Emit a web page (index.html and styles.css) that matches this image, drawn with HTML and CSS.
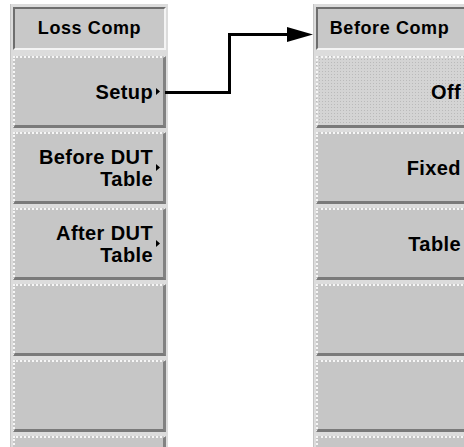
FILE: index.html
```html
<!DOCTYPE html>
<html lang="en">
<head>
  <meta charset="UTF-8" />
  <title>Loss Comp Menu</title>
  <link rel="stylesheet" href="styles.css">
</head>
<body>
  <div class="screen">
    <div class="panel">
      <div class="title">Loss Comp</div>
      <div class="key">
        <span class="label">Setup</span>
        <span class="more"><svg width="4" height="7" viewBox="0 0 4 7"><polygon points="0,0 4,3.5 0,7" fill="#000"/></svg></span>
      </div>
      <div class="key">
        <span class="label">Before DUT<br>Table</span>
        <span class="more"><svg width="4" height="7" viewBox="0 0 4 7"><polygon points="0,0 4,3.5 0,7" fill="#000"/></svg></span>
      </div>
      <div class="key">
        <span class="label">After DUT<br>Table</span>
        <span class="more"><svg width="4" height="7" viewBox="0 0 4 7"><polygon points="0,0 4,3.5 0,7" fill="#000"/></svg></span>
      </div>
      <div class="key"></div>
      <div class="key"></div>
      <div class="key"></div>
    </div>

    <!-- connector from Setup to the submenu -->
    <svg class="link" width="148" height="120" viewBox="0 0 148 120">
      <path d="M0 92.5 H64.5 V34.5 H124" fill="none" stroke="#000" stroke-width="3"/>
      <polygon points="122,27 148,34.5 122,42" fill="#000"/>
    </svg>

    <div class="panel sub">
      <div class="title">Before Comp</div>
      <div class="key selected"><span class="label">Off</span></div>
      <div class="key"><span class="label">Fixed</span></div>
      <div class="key"><span class="label">Table</span></div>
      <div class="key"></div>
      <div class="key"></div>
      <div class="key"></div>
    </div>
  </div>
</body>
</html>
```

FILE: styles.css
```css
body {
  margin: 0;
  background: #fff;
  font-family: 'Liberation Sans', Arial, sans-serif;
  color: #000;
  overflow: hidden;
}
.screen {
  display: flex;
  align-items: flex-start;
  padding: 4px 0 0 10px;
  width: 600px;
}
.panel {
  flex: none;
  width: 158px;
  background: #dcdcdc;
  border-left: 1px solid #c4c4c4;
  box-sizing: border-box;
  padding: 3px 2px 0 2px;
  display: flex;
  flex-direction: column;
  gap: 4px;
}
.panel.sub {
  width: 160px;
}
.title {
  flex: none;
  height: 43px;
  box-sizing: border-box;
  background: #c8c8c8;
  border-top: 2px solid #6e6e6e;
  border-left: 2px solid #6e6e6e;
  border-bottom: 2px solid #f4f4f4;
  border-right: 2px solid #f4f4f4;
  font-size: 18px;
  font-weight: bold;
  letter-spacing: 0.6px;
  display: flex;
  align-items: center;
  justify-content: center;
  margin-bottom: 2px;
}
.sub .title {
  padding-right: 8px;
}
.key {
  flex: none;
  height: 72px;
  box-sizing: border-box;
  background: #c6c6c6;
  border-top: 2px dotted #f6f6f6;
  border-left: 2px dotted #f6f6f6;
  border-bottom: 3px solid #7a7a7a;
  border-right: 3px solid #828282;
  display: flex;
  align-items: center;
  justify-content: flex-end;
  padding-right: 3px;
  font-size: 20px;
  font-weight: bold;
  letter-spacing: 0.4px;
  line-height: 22px;
  text-align: right;
}
.sub .key {
  padding-right: 7px;
}
.key .more {
  width: 6px;
  display: flex;
  justify-content: flex-end;
  padding-left: 1px;
}
.key .more svg {
  display: block;
}
.key.selected {
  background-color: #d4d4d4;
  background-image: radial-gradient(#bababa 0.7px, transparent 0.9px);
  background-size: 3px 3px;
}
.link {
  flex: none;
  display: block;
  margin-left: -3px;
  margin-top: -4px;
}
```
